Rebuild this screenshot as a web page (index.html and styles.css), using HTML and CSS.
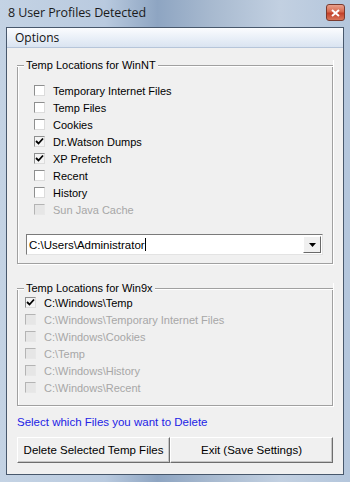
FILE: index.html
```html
<!DOCTYPE html>
<html lang="en">
<head>
    <meta charset="UTF-8">
    <meta name="viewport" content="width=device-width, initial-scale=1.0">
    <title>8 User Profiles Detected</title>
    <link rel="stylesheet" href="styles.css">
</head>
<body>
    <div class="window">
        <div class="titlebar">
            <span class="title">8 User Profiles Detected</span>
            <span class="close-btn">
                <svg width="9" height="8" viewBox="0 0 9 8">
                    <path d="M1 1 L8 7 M8 1 L1 7" stroke="#fff" stroke-width="2"/>
                </svg>
            </span>
        </div>

        <div class="client">
            <div class="menubar"><span class="menu-item">Options</span></div>

            <div class="content">
                <div class="group group-nt">
                    <div class="group-title"><span>Temp Locations for WinNT</span></div>
                    <div class="group-body">
                        <div class="check-list">
                            <label class="check"><span class="box"></span>Temporary Internet Files</label>
                            <label class="check"><span class="box"></span>Temp Files</label>
                            <label class="check"><span class="box"></span>Cookies</label>
                            <label class="check checked"><span class="box"><svg width="9" height="9" viewBox="0 0 9 9"><path d="M1 4 L3.5 6.5 L8 1.5" stroke="#000" stroke-width="1.8" fill="none"/></svg></span>Dr.Watson Dumps</label>
                            <label class="check checked"><span class="box"><svg width="9" height="9" viewBox="0 0 9 9"><path d="M1 4 L3.5 6.5 L8 1.5" stroke="#000" stroke-width="1.8" fill="none"/></svg></span>XP Prefetch</label>
                            <label class="check"><span class="box"></span>Recent</label>
                            <label class="check"><span class="box"></span>History</label>
                            <label class="check disabled"><span class="box"></span>Sun Java Cache</label>
                        </div>

                        <div class="combo">
                            <span class="combo-text">C:\Users\Administrator<span class="caret"></span></span>
                            <span class="combo-btn">
                                <svg width="7" height="4" viewBox="0 0 7 4"><path d="M0 0 H7 L3.5 4 Z" fill="#000"/></svg>
                            </span>
                        </div>
                    </div>
                </div>

                <div class="group group-9x">
                    <div class="group-title"><span>Temp Locations for Win9x</span></div>
                    <div class="group-body">
                        <div class="check-list">
                            <label class="check checked"><span class="box"><svg width="9" height="9" viewBox="0 0 9 9"><path d="M1 4 L3.5 6.5 L8 1.5" stroke="#000" stroke-width="1.8" fill="none"/></svg></span>C:\Windows\Temp</label>
                            <label class="check disabled"><span class="box"></span>C:\Windows\Temporary Internet Files</label>
                            <label class="check disabled"><span class="box"></span>C:\Windows\Cookies</label>
                            <label class="check disabled"><span class="box"></span>C:\Temp</label>
                            <label class="check disabled"><span class="box"></span>C:\Windows\History</label>
                            <label class="check disabled"><span class="box"></span>C:\Windows\Recent</label>
                        </div>
                    </div>
                </div>

                <p class="hint">Select which Files you want to Delete</p>

                <div class="buttons">
                    <button class="btn btn-delete">Delete Selected Temp Files</button>
                    <button class="btn btn-exit">Exit (Save Settings)</button>
                </div>
            </div>
        </div>
    </div>
</body>
</html>
```

FILE: styles.css
```css
body {
    margin: 0;
    padding: 0;
    font-family: "Liberation Sans", Arial, sans-serif;
    font-size: 11px;
    color: #000;
    background: #9fb4cc;
}

.window {
    width: 350px;
    height: 482px;
    display: flex;
    flex-direction: column;
    background: linear-gradient(90deg, #c4d3e4 0%, #b9cadf 30%, #8ea5c2 45%, #a7b9cf 60%, #c2d0e1 80%, #b4c6dc 100%);
    box-sizing: border-box;
}

/* Title bar */
.titlebar {
    height: 27px;
    display: flex;
    align-items: center;
    justify-content: space-between;
    padding: 0 5px 2px 8px;
    box-sizing: border-box;
}

.title {
    font-family: "Open Sans", "DejaVu Sans", sans-serif;
    font-size: 12.5px;
    color: #1b1b1b;
    letter-spacing: -0.1px;
}

.close-btn {
    width: 19px;
    height: 17px;
    display: flex;
    align-items: center;
    justify-content: center;
    border: 1px solid #7b3a2e;
    border-radius: 3px;
    background: linear-gradient(180deg, #e9a08c 0%, #d6694f 45%, #c2402a 55%, #d9765a 100%);
    box-sizing: border-box;
}

/* Client area */
.client {
    flex: 1;
    margin: 0 6px 7px 6px;
    border: 1px solid #48586c;
    background: #f0f0f0;
    display: flex;
    flex-direction: column;
}

.menubar {
    height: 19px;
    display: flex;
    align-items: center;
    padding-left: 8px;
    background: linear-gradient(180deg, #fbfcfe 0%, #eaf0f8 50%, #dae4f1 100%);
    border-bottom: 1px solid #b6c5d9;
    font-family: "Open Sans", "DejaVu Sans", sans-serif;
    font-size: 12px;
    color: #111;
}

.content {
    padding: 0 10px 0 10px;
}

/* Group boxes (etched frame with caption in the top line) */
.group {
    border: 1px solid #a0a0a0;
    border-top: none;
    box-shadow: 1px 1px 0 #fff, inset 1px 0 0 #fff, inset 0 -1px 0 #f0f0f0;
}

.group-title {
    height: 13px;
    margin: 0 -1px;
    display: flex;
    line-height: 13px;
    background: linear-gradient(180deg, #f0f0f0 0, #f0f0f0 6px, transparent 6px);
}

.group-title::before,
.group-title::after {
    content: "";
    height: 6px;
    border-bottom: 1px solid #a0a0a0;
    box-shadow: 0 1px 0 #fff;
}

.group-title::before {
    width: 7px;
}

.group-title::after {
    flex: 1;
}

.group-title span {
    padding: 0 2px;
}

.group-nt {
    margin-top: 11px;
}

.group-nt .group-body {
    padding: 10px 9px 8px 16px;
}

.group-9x {
    margin-top: 18px;
}

.group-9x .group-body {
    padding: 0 8px 9px 7px;
    margin-top: -1px;
}

.check-list {
    display: flex;
    flex-direction: column;
}

.check {
    height: 17px;
    display: flex;
    align-items: center;
    gap: 8px;
    white-space: nowrap;
}

.box {
    width: 11px;
    height: 11px;
    box-sizing: border-box;
    border: 1px solid #8e8f8f;
    border-right-color: #dcdcdc;
    border-bottom-color: #dcdcdc;
    background: #fff;
    display: flex;
    align-items: center;
    justify-content: center;
    flex-shrink: 0;
}

.check.checked .box {
    background: #f4f4f4;
}

.check.disabled {
    color: #a7a7a7;
}

.check.disabled .box {
    background: #e6e6e6;
    border-color: #b4b4b4;
    border-right-color: #e8e8e8;
    border-bottom-color: #e8e8e8;
}

/* Combo box */
.combo {
    margin-top: 16px;
    margin-left: -8px;
    height: 21px;
    display: flex;
    border: 1px solid #7a7a7a;
    border-right-color: #e3e3e3;
    border-bottom-color: #e3e3e3;
    background: #fff;
    box-sizing: border-box;
}

.combo-text {
    flex: 1;
    display: flex;
    align-items: center;
    padding-left: 2px;
    font-size: 11.5px;
}

.caret {
    width: 1px;
    height: 13px;
    background: #000;
}

.combo-btn {
    width: 16px;
    margin: 1px;
    display: flex;
    align-items: center;
    justify-content: center;
    background: #f0f0f0;
    border: 1px solid #fff;
    border-right-color: #696969;
    border-bottom-color: #696969;
}

/* Footer */
.hint {
    margin: 9px 0 0 0;
    line-height: 14px;
    color: #2323e6;
    font-size: 11.5px;
}

.buttons {
    display: flex;
    margin-top: 8px;
}

.btn {
    height: 26px;
    font-family: "Liberation Sans", Arial, sans-serif;
    font-size: 11.5px;
    color: #000;
    background: #f0f0f0;
    border: 1px solid #fff;
    border-right-color: #6d6d6d;
    border-bottom-color: #6d6d6d;
    box-shadow: inset -1px -1px 0 #c5c5c5;
    padding: 0;
}

.btn-delete {
    width: 153px;
}

.btn-exit {
    flex: 1;
}
```
